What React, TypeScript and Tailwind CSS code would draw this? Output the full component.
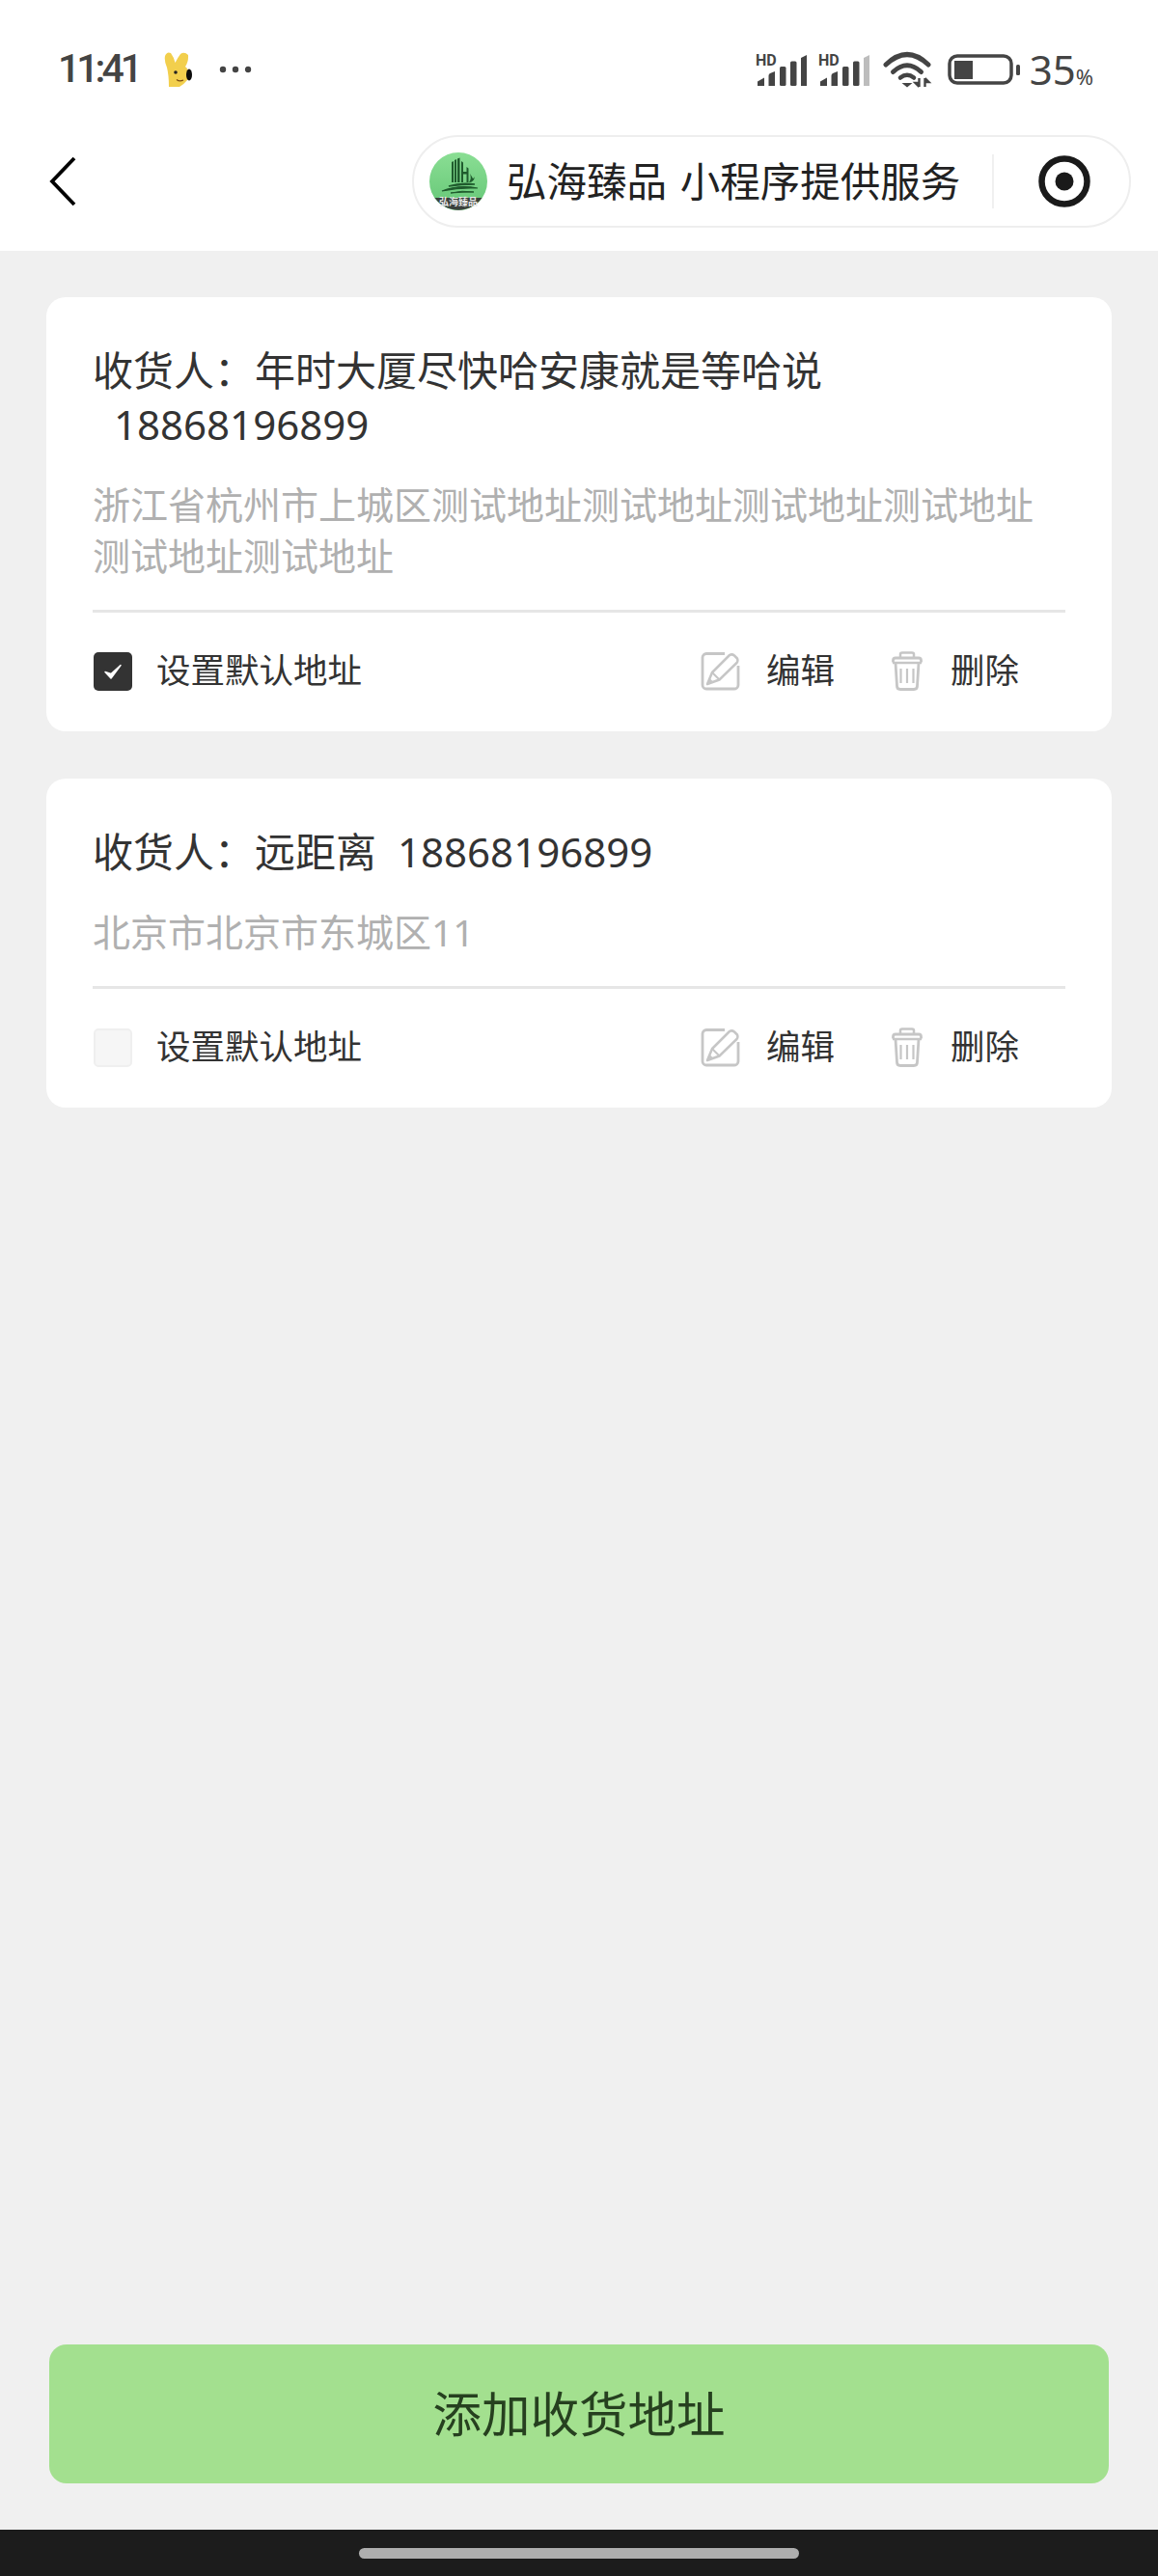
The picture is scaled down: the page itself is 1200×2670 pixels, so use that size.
const CJK = "font-['Noto_Sans','Noto_Sans_CJK_SC',sans-serif]";

function Signal({ last }: { last: string }) {
  return (
    <svg width="55" height="40" viewBox="0 -4 55 40">
      <text x="0" y="11.500" fontSize="16" fontWeight="700" fill="#444" fontFamily="Roboto, sans-serif">HD</text>
      <path d="M2 33V28.500L9 24.500V33Z" fill="#444" />
      <path d="M13.500 33V22.500Q13.500 20.500 15 20L20 18V33Z" fill="#444" />
      <rect x="25" y="13" width="6.500" height="20" rx="1.500" fill="#444" />
      <rect x="36" y="7.500" width="6.500" height="25.500" rx="1.500" fill="#444" />
      <path d="M47 33V4L53 1V33Z" fill={last} />
    </svg>
  );
}

function Wifi() {
  return (
    <svg width="52" height="38" viewBox="0 0 52 38">
      <path d="M3 14Q25 -7 47 14" fill="none" stroke="#444" strokeWidth="5" strokeLinecap="round" />
      <path d="M10.500 21.500Q25 8 39.500 21.500" fill="none" stroke="#444" strokeWidth="5" strokeLinecap="round" />
      <path d="M18 27.500Q25 22 32 27.500" fill="none" stroke="#444" strokeWidth="4.500" strokeLinecap="round" />
      <path d="M19.500 33H30.500L25 37.500Z" fill="#444" />
      <path d="M37.500 28V37M37.500 37L33.500 33H37.500M43.500 37V28M43.500 28L47.500 32H43.500" fill="none" stroke="#444" strokeWidth="2.400" />
    </svg>
  );
}

function Battery() {
  return (
    <svg width="76" height="32" viewBox="0 0 76 32">
      <rect x="2" y="2" width="64" height="28" rx="8" fill="none" stroke="#444" strokeWidth="3.500" />
      <rect x="7" y="7" width="19" height="19" fill="#444" />
      <rect x="71" y="11" width="4" height="11" rx="1.500" fill="#444" />
    </svg>
  );
}

function Rabbit() {
  return (
    <svg width="32" height="37" viewBox="0 0 32 37">
      <path d="M3 4Q5 -1 9 1Q12 5 13.500 11Q16 6 19 2Q23 -1 27 3Q27.500 10 24 15Q30 20 27 28Q23 33 18 36H7Q7 24 5 16Q2 9 3 4Z" fill="#f2cf4d" />
      <ellipse cx="28" cy="23.500" rx="3" ry="6" fill="#0c0c0c" />
      <circle cx="14" cy="21" r="1.800" fill="#222" />
      <path d="M15 28.500Q18 31 22 29" fill="none" stroke="#7a4a12" strokeWidth="1.200" />
    </svg>
  );
}

function Logo() {
  return (
    <svg width="60" height="60" viewBox="0 0 60 60" className="shrink-0">
      <defs>
        <linearGradient id="lg" x1="0" y1="0" x2="0" y2="1">
          <stop offset="0" stopColor="#8ade94" />
          <stop offset="0.8" stopColor="#6ccb7c" />
        </linearGradient>
      </defs>
      <circle cx="30" cy="30" r="30" fill="url(#lg)" />
      <path d="M5.500 47H54.500A30 30 0 0 1 5.500 47Z" fill="#3b403c" />
      <path d="M23 10L25 9V31H23ZM26 8L28 7V31H26ZM29 6.500L31.500 5.500V31H29Z" fill="#1f5b2d" />
      <path d="M33 9L35 10.500V20H38.500V15L40.500 16.500V31H38.500V22.500H35V31H33Z" fill="#1f5b2d" />
      <path d="M42 22Q44 27 41 31Q46 31 47 25Q46 27 45 27Q44 25 42 22Z" fill="#1f5b2d" />
      <path d="M20 35Q32 31 47 33Q33 33 20 35Z" fill="#1f5b2d" stroke="#1f5b2d" strokeWidth="1.500" />
      <path d="M13 40Q30 33 50 37Q32 36 13 40Z" fill="#1f5b2d" stroke="#1f5b2d" strokeWidth="1.200" />
      <path d="M22 42Q34 39 46 41Q34 41 22 42Z" fill="#1f5b2d" stroke="#1f5b2d" strokeWidth="1" />
      <text x="30" y="55" textAnchor="middle" fontSize="10" fontWeight="700" fill="#e8e8e8" fontFamily="'Noto Sans CJK SC', sans-serif">弘海臻品</text>
    </svg>
  );
}

function EditIcon() {
  return (
    <svg width="41" height="41" viewBox="0 0 41 41">
      <path d="M25 2.500H6A4 4 0 0 0 2 6.500V35A4 4 0 0 0 6 39H35A4 4 0 0 0 39 35V15" fill="none" stroke="#c6c6c6" strokeWidth="2.800" />
      <path d="M7 34L12 22L30 4Q32.500 2.500 35 4.500L38 7.500Q39 10 37.500 12L19.500 29.500Z" fill="none" stroke="#c6c6c6" strokeWidth="2.500" strokeLinejoin="round" />
      <path d="M7 34L9.500 28L13.500 32Z" fill="#c6c6c6" />
      <path d="M12 22L19.500 29.500" fill="none" stroke="#c6c6c6" strokeWidth="2" />
    </svg>
  );
}

function TrashIcon() {
  return (
    <svg width="32" height="41" viewBox="0 0 32 41">
      <path d="M9 7V3Q9 1.500 11 1.500H21Q23 1.500 23 3V7" fill="none" stroke="#c6c6c6" strokeWidth="2.500" />
      <path d="M1.500 11.500V9.500Q1.500 7 4 7H28Q30.500 7 30.500 9.500V11.500" fill="none" stroke="#c6c6c6" strokeWidth="2.800" />
      <path d="M1 12H31" stroke="#c6c6c6" strokeWidth="2.500" />
      <path d="M4 12L5.500 36Q5.500 39.500 9 39.500H23Q26.500 39.500 26.500 36L28 12" fill="none" stroke="#c6c6c6" strokeWidth="2.800" />
      <path d="M9.500 18V33M16 18V33M22.500 18V33" stroke="#c6c6c6" strokeWidth="2.200" />
    </svg>
  );
}

function Card({ name, phone, address, checked }: { name: string; phone: string; address: string; checked: boolean }) {
  return (
    <div className="bg-white rounded-[20px] px-[48px] pt-[48px]">
      <div className="text-[42px] leading-[56px] text-[#333]">
        {name}
        <span className="inline-block ml-[22px]">{phone}</span>
      </div>
      <div className="mt-[28px] text-[39px] leading-[53px] text-[#b0b0b0]">{address}</div>
      <div className="mt-[30px] h-[3px] bg-[#e6e6e6]" />
      <div className="h-[123px] pb-[2px] flex items-center justify-between text-[35.500px] text-[#333]">
        <div className="flex items-center">
          {checked ? (
            <div className="ml-px w-[40px] h-[40px] rounded-[5px] bg-[#333] flex items-center justify-center">
              <svg width="24" height="24" viewBox="0 0 24 24">
                <path d="M4 12.500L10 19L20 5.500L10 14.500Z" fill="#fff" stroke="#fff" strokeWidth="1.500" strokeLinejoin="round" />
              </svg>
            </div>
          ) : (
            <div className="ml-px w-[40px] h-[40px] rounded-[5px] bg-[#f6f6f6] border-2 border-[#efefef]" />
          )}
          <span className="ml-[25px] pb-[2px]">设置默认地址</span>
        </div>
        <div className="flex items-center pr-[48px]">
          <EditIcon />
          <span className="ml-[27px] pb-[2px]">编辑</span>
          <div className="ml-[59px]"><TrashIcon /></div>
          <span className="ml-[29px] pb-[2px]">删除</span>
        </div>
      </div>
    </div>
  );
}

export default function App() {
  return (
    <div className={`w-[1200px] h-[2670px] bg-[#f0f0f0] flex flex-col ${CJK}`}>
      <div className="bg-white h-[260px] shrink-0">
        <div className="h-[140px] pt-[4px] pl-[60px] pr-[67px] flex items-center justify-between">
          <div className="flex items-center">
            <span className="text-[41px] font-medium tracking-[-4px] text-[#444] font-['Roboto',sans-serif]">11:41</span>
            <div className="ml-[24px]"><Rabbit /></div>
            <svg className="ml-[27px]" width="34" height="8" viewBox="0 0 34 8">
              <circle cx="4" cy="4" r="3.200" fill="#444" />
              <circle cx="17" cy="4" r="3.200" fill="#444" />
              <circle cx="30" cy="4" r="3.200" fill="#444" />
            </svg>
          </div>
          <div className="flex items-center">
            <Signal last="#444" />
            <div className="ml-[10px]"><Signal last="#bdbdbd" /></div>
            <div className="ml-[12px]"><Wifi /></div>
            <div className="ml-[15px]"><Battery /></div>
            <span className="ml-[9px] text-[42px] leading-none text-[#444]">35<span className="text-[22px]">%</span></span>
          </div>
        </div>
        <div className="h-[96px] pl-[51px] pr-[28px] flex items-center justify-between">
          <svg width="28" height="52" viewBox="0 0 28 52">
            <path d="M26 2L3 26L26 50" fill="none" stroke="#000" strokeWidth="3.800" />
          </svg>
          <div className="w-[745px] h-[96px] rounded-[48px] border-2 border-[#eeeeee] pl-[16px] flex items-center">
            <Logo />
            <div className="ml-[20px] w-[503px] text-[41.500px] text-[#222] whitespace-nowrap [word-spacing:3px]">弘海臻品 小程序提供服务</div>
            <div className="w-[2px] h-[56px] bg-[#f0f0f0]" />
            <svg className="ml-[46px]" width="54" height="54" viewBox="0 0 54 54">
              <circle cx="27" cy="27" r="23.500" fill="none" stroke="#1a1a1a" strokeWidth="6.500" />
              <circle cx="27" cy="27" r="9.500" fill="#1a1a1a" />
            </svg>
          </div>
        </div>
      </div>

      <div className="px-[48px] pt-[48px] flex flex-col gap-[49px]">
        <Card
          name="收货人：年时大厦尽快哈安康就是等哈说"
          phone="18868196899"
          address="浙江省杭州市上城区测试地址测试地址测试地址测试地址测试地址测试地址"
          checked
        />
        <Card name="收货人：远距离" phone="18868196899" address="北京市北京市东城区11" checked={false} />
      </div>

      <div className="mt-auto px-[51px]">
        <button className="w-full h-[144px] rounded-[18px] bg-[#a3e08f] text-[50.500px] text-[#26401f]">添加收货地址</button>
      </div>
      <div className="mt-[48px] h-[48px] bg-[#1c1c1c] flex items-center justify-center">
        <div className="w-[456px] h-[11px] rounded-full bg-[#aeaeae]" />
      </div>
    </div>
  );
}
